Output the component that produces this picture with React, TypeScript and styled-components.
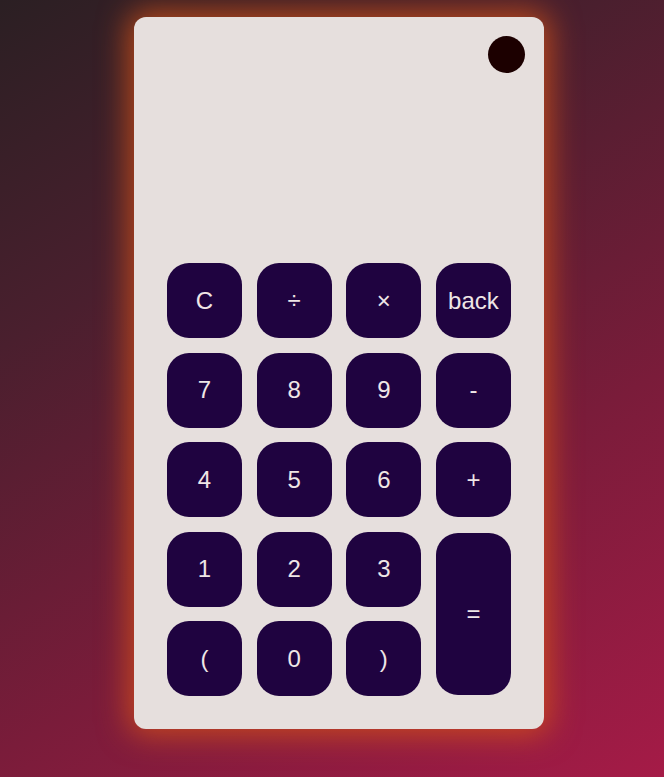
import React from "react";
import styled, { createGlobalStyle } from "styled-components";

const Global = createGlobalStyle`
  html, body { margin: 0; padding: 0; }
  body {
    min-height: 777px;
    background: linear-gradient(150deg, #2b1f23 0%, #4a1f2e 30%, #7a1c3a 65%, #a51b47 100%);
    font-family: "Liberation Sans", Arial, sans-serif;
  }
`;

const Page = styled.div`
  display: flex;
  justify-content: flex-start;
  padding: 17px 0 48px 134px;
  min-height: 777px;
  box-sizing: border-box;
`;

const Card = styled.div`
  position: relative;
  width: 410px;
  height: 712px;
  box-sizing: border-box;
  background: #e6dfdd;
  border-radius: 12px;
  box-shadow: 0 0 30px 6px rgba(214, 82, 24, 0.8);
  display: flex;
  flex-direction: column;
  padding: 0 33px 33px;
`;

const Toggle = styled.div`
  position: absolute;
  top: 19px;
  right: 19px;
  width: 37px;
  height: 37px;
  border-radius: 50%;
  background: #1c0000;
`;

const Display = styled.div`
  height: 246px;
  flex: none;
`;

const Keys = styled.div`
  display: grid;
  grid-template-columns: repeat(4, 75px);
  grid-auto-rows: 75px;
  column-gap: 14.67px;
  row-gap: 14.5px;
`;

const Key = styled.button<{ $tall?: boolean }>`
  border: none;
  border-radius: 22px;
  background: #1f0340;
  color: #efe6e6;
  font-family: "Liberation Sans", Arial, sans-serif;
  font-size: 24px;
  padding: 0;
  display: flex;
  align-items: center;
  justify-content: center;
  grid-row: ${(p) => (p.$tall ? "span 2" : "auto")};
  margin: ${(p) => (p.$tall ? "1px 0" : "0")};
`;

const rows = [
  ["C", "÷", "×", "back"],
  ["7", "8", "9", "-"],
  ["4", "5", "6", "+"],
];

export default function App() {
  return (
    <>
      <Global />
      <Page>
        <Card>
          <Toggle />
          <Display />
          <Keys>
            {rows.flat().map((k) => (
              <Key key={k}>{k}</Key>
            ))}
            <Key>1</Key>
            <Key>2</Key>
            <Key>3</Key>
            <Key $tall>=</Key>
            <Key>(</Key>
            <Key>0</Key>
            <Key>)</Key>
          </Keys>
        </Card>
      </Page>
    </>
  );
}
